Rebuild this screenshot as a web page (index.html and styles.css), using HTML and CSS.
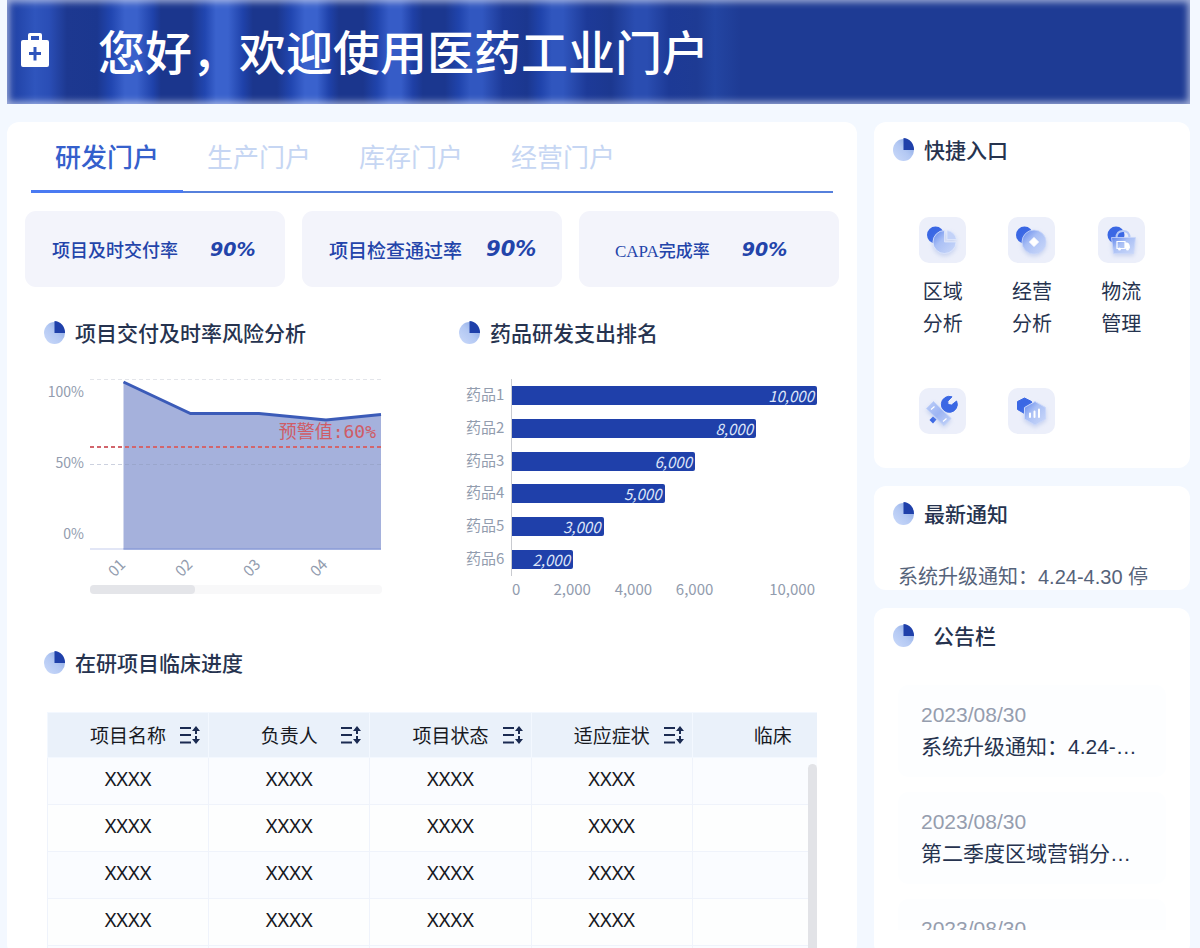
FILE: index.html
```html
<!DOCTYPE html>
<html lang="zh-CN">
<head>
<meta charset="utf-8">
<title>医药工业门户</title>
<meta name="viewport" content="width=device-width, initial-scale=1">
<link rel="stylesheet" href="styles.css">
</head>
<body>
<svg class="defs" aria-hidden="true">
  <defs>
    <linearGradient id="pie-light" x1="0" y1="1" x2="1" y2="0">
      <stop offset="0" stop-color="#cbdafa"/><stop offset=".5" stop-color="#b3c8f3"/><stop offset="1" stop-color="#7f9fe0"/>
    </linearGradient>
    <linearGradient id="glass" x1="0" y1="0" x2="1" y2="1">
      <stop offset="0" stop-color="#5d83ec"/><stop offset=".4" stop-color="#a9bff5"/><stop offset="1" stop-color="#ccd9f9"/>
    </linearGradient>
    <linearGradient id="glass-plate" x1="0" y1="0" x2="1" y2="1">
      <stop offset="0" stop-color="#bccdf8"/><stop offset=".5" stop-color="#9db5f3"/><stop offset="1" stop-color="#c6d5f9"/>
    </linearGradient>
    <filter id="soft" x="-30%" y="-30%" width="160%" height="170%">
      <feDropShadow dx="0" dy="2" stdDeviation="2" flood-color="#8fa6e0" flood-opacity=".4"/>
    </filter>
    <symbol id="pie" viewBox="0 0 21 23">
      <ellipse cx="10.5" cy="12" rx="10.5" ry="11" fill="url(#pie-light)"/>
      <path d="M10.500 12V0A10.500 12 0 0 1 21 12Z" fill="#1f40aa"/>
    </symbol>
    <symbol id="sort" viewBox="0 0 20 18">
      <g fill="none" stroke="#1b2b52" stroke-width="2"><path d="M0 2H11M0 9H11M0 16.500H11M16 3.500V8M16 10V15"/></g>
      <path d="M16 0L20 5H12ZM16 18L20 13H12Z" fill="#1b2b52"/>
    </symbol>
  </defs>
</svg>

<header class="banner">
  <svg class="banner-icon" viewBox="0 0 28 34" aria-hidden="true">
    <path d="M7 7V2Q7 0 9 0H19Q21 0 21 2V7H26Q28 7 28 9V32Q28 34 26 34H2Q0 34 0 32V9Q0 7 2 7ZM10 7H18V3H10ZM12.500 14V19H8V22H12.500V27.500H15.500V22H20V19H15.500V14Z" fill="#fff" fill-rule="evenodd"/>
  </svg>
  <h1 class="banner-title">您好，欢迎使用医药工业门户</h1>
</header>

<main class="layout">
  <section class="card portal">
    <nav class="tabs">
      <button class="tab tab-active" type="button">研发门户</button>
      <button class="tab" type="button">生产门户</button>
      <button class="tab" type="button">库存门户</button>
      <button class="tab" type="button">经营门户</button>
    </nav>

    <div class="stats">
      <div class="stat"><span class="stat-label">项目及时交付率</span><span class="stat-value">90%</span></div>
      <div class="stat stat-large"><span class="stat-label">项目检查通过率</span><span class="stat-value">90%</span></div>
      <div class="stat stat-small"><span class="stat-label">CAPA完成率</span><span class="stat-value">90%</span></div>
    </div>

    <div class="charts">
      <section>
        <h2 class="title"><svg class="pie"><use href="#pie"/></svg>项目交付及时率风险分析</h2>
        <svg class="area-chart" viewBox="0 0 340 230" role="img" aria-label="项目交付及时率风险分析">
          <path d="M46 9.500H337" class="grid-line"/>
          <path d="M79.500 12L146.500 43.500H215L282 50L337 44.500V179.500H79.500Z" fill="#a5b1dc"/>
          <path d="M46 94.500H337" class="grid-line grid-mid"/>
          <path d="M46 179H337" stroke="#8d9edb" stroke-opacity=".5"/>
          <path d="M79.500 179H337" stroke="#8497d6"/>
          <path d="M79.500 12L146.500 43.500H215L282 50L337 44.500" fill="none" stroke="#3b5bb8" stroke-width="3"/>
          <path d="M46 77H337" class="warn-line"/>
          <text x="332" y="68" class="warn-text">预警值:60%</text>
          <g class="axis-y"><text x="40" y="27">100%</text><text x="40" y="98">50%</text><text x="40" y="169">0%</text></g>
          <g class="axis-x">
            <text transform="translate(73 198) rotate(-45)" y="5">01</text>
            <text transform="translate(140 198) rotate(-45)" y="5">02</text>
            <text transform="translate(208 198) rotate(-45)" y="5">03</text>
            <text transform="translate(275 198) rotate(-45)" y="5">04</text>
          </g>
          <rect x="46" y="215" width="292" height="9" rx="4" fill="#f8f8f9"/>
          <rect x="46" y="215" width="105" height="9" rx="4" fill="#e4e5e9"/>
        </svg>
      </section>

      <section>
        <h2 class="title"><svg class="pie"><use href="#pie"/></svg>药品研发支出排名</h2>
        <div class="bar-chart">
          <div class="bar-names"><span>药品1</span><span>药品2</span><span>药品3</span><span>药品4</span><span>药品5</span><span>药品6</span></div>
          <div class="bar-plot">
            <div class="bar" style="width:100%">10,000</div>
            <div class="bar" style="width:80%">8,000</div>
            <div class="bar" style="width:60%">6,000</div>
            <div class="bar" style="width:50%">5,000</div>
            <div class="bar" style="width:30%">3,000</div>
            <div class="bar" style="width:20%">2,000</div>
          </div>
          <div class="bar-scale"><span>0</span><span>2,000</span><span>4,000</span><span>6,000</span><span>10,000</span></div>
        </div>
      </section>
    </div>

    <section class="progress">
      <h2 class="title"><svg class="pie"><use href="#pie"/></svg>在研项目临床进度</h2>
      <div class="table-wrap">
        <table class="table">
          <thead>
            <tr>
              <th><div class="th"><span>项目名称</span><button class="sort" type="button" aria-label="排序"><svg><use href="#sort"/></svg></button></div></th>
              <th><div class="th"><span>负责人</span><button class="sort" type="button" aria-label="排序"><svg><use href="#sort"/></svg></button></div></th>
              <th><div class="th"><span>项目状态</span><button class="sort" type="button" aria-label="排序"><svg><use href="#sort"/></svg></button></div></th>
              <th><div class="th"><span>适应症状</span><button class="sort" type="button" aria-label="排序"><svg><use href="#sort"/></svg></button></div></th>
              <th><div class="th"><span>临床</span></div></th>
            </tr>
          </thead>
          <tbody>
            <tr><td>XXXX</td><td>XXXX</td><td>XXXX</td><td>XXXX</td><td></td></tr>
            <tr><td>XXXX</td><td>XXXX</td><td>XXXX</td><td>XXXX</td><td></td></tr>
            <tr><td>XXXX</td><td>XXXX</td><td>XXXX</td><td>XXXX</td><td></td></tr>
            <tr><td>XXXX</td><td>XXXX</td><td>XXXX</td><td>XXXX</td><td></td></tr>
            <tr><td></td><td></td><td></td><td></td><td></td></tr>
          </tbody>
        </table>
        <div class="scroll-thumb"></div>
      </div>
    </section>
  </section>

  <aside class="side">
    <section class="card side-card">
      <h2 class="title"><svg class="pie"><use href="#pie"/></svg>快捷入口</h2>
      <div class="shortcuts">
        <button class="shortcut" type="button">
          <svg class="tile" viewBox="0 0 47 46" aria-hidden="true">
            <circle cx="16.500" cy="18" r="8.500" fill="#3a67e4"/>
            <g filter="url(#soft)" stroke="#dfe8fd" stroke-width=".8">
              <path d="M25.500 13.500A11.500 11.500 0 1 0 37 25H25.500Z" fill="url(#glass)"/>
              <path d="M28 13.500A10.500 10.500 0 0 1 37.500 22.500H28Z" fill="#c3d2f8"/>
            </g>
          </svg>
          <span class="shortcut-name">区域<br>分析</span>
        </button>
        <button class="shortcut" type="button">
          <svg class="tile" viewBox="0 0 47 46" aria-hidden="true">
            <circle cx="16.500" cy="18" r="8.500" fill="#3a67e4"/>
            <circle cx="26" cy="25" r="12" fill="url(#glass)" stroke="#c9d7fa" stroke-width=".8" filter="url(#soft)"/>
            <path d="M26 20.500L30.500 25L26 29.500L21.500 25Z" fill="#fff" stroke="#fff" stroke-linejoin="round"/>
          </svg>
          <span class="shortcut-name">经营<br>分析</span>
        </button>
        <button class="shortcut" type="button">
          <svg class="tile" viewBox="0 0 47 46" aria-hidden="true">
            <circle cx="18" cy="18" r="8.500" fill="#3a67e4"/>
            <path d="M18.500 21Q18.500 14 25 14T31.500 21" fill="none" stroke="#b4c8f7" stroke-width="2"/>
            <path d="M13.500 20.500H37.500L35.500 36.500H15.500Z" fill="url(#glass)" stroke="#c9d7fa" stroke-width=".8" filter="url(#soft)"/>
            <path d="M19 24.500H27V31.500H19Z" fill="none" stroke="#fff" stroke-width="1.200"/>
            <path d="M27 25.500H29Q32 26 32 31.500H27Z" fill="#fff"/>
            <circle cx="21.500" cy="32" r="1.500" fill="#fff"/><circle cx="29.500" cy="32" r="1.500" fill="#fff"/>
          </svg>
          <span class="shortcut-name">物流<br>管理</span>
        </button>
        <button class="shortcut" type="button" aria-label="维修工具">
          <svg class="tile" viewBox="0 0 47 46" aria-hidden="true">
            <path d="M33 8.800A8 8 0 1 0 37.600 13L32.500 17L29 16.500L28.800 13.200Z" fill="#3a67e4" stroke="#3a67e4" stroke-linejoin="round"/>
            <path d="M14 28.500L17.500 31.500L14 35.500L10.500 32Z" fill="#3a67e4"/>
            <path d="M14.500 13.500L32 30.500L25 37.500L7.500 20.500Z" fill="url(#glass-plate)" stroke="#bfd0f8" stroke-linejoin="round" filter="url(#soft)"/>
            <path d="M12 21.500L15.500 18.500M24 33.500L27.500 30.500" stroke="#fff" stroke-width="1.200"/>
          </svg>
        </button>
        <button class="shortcut" type="button" aria-label="数据统计">
          <svg class="tile" viewBox="0 0 47 46" aria-hidden="true">
            <path d="M16.500 10L23.500 13.500V21.500L16.500 25.500L9.500 21.500V13.500Z" fill="#3a67e4" stroke="#3a67e4" stroke-linejoin="round"/>
            <path d="M27 13.500L37.500 19.500V31L27 37L16.500 31V19.500Z" fill="url(#glass)" stroke="#c9d7fa" stroke-linejoin="round" filter="url(#soft)"/>
            <path d="M22 25.500V29M26.500 23.500V29M31 21.500V29" stroke="#fff" stroke-width="2" stroke-linecap="round"/>
          </svg>
        </button>
      </div>
    </section>

    <section class="card side-card notice">
      <h2 class="title"><svg class="pie"><use href="#pie"/></svg>最新通知</h2>
      <p class="notice-text">系统升级通知：4.24-4.30 停</p>
    </section>

    <section class="card side-card board">
      <h2 class="title title-spaced"><svg class="pie"><use href="#pie"/></svg>公告栏</h2>
      <ul class="board-list">
        <li class="board-item"><time class="board-date">2023/08/30</time><span class="board-text">系统升级通知：4.24-…</span></li>
        <li class="board-item"><time class="board-date">2023/08/30</time><span class="board-text">第二季度区域营销分…</span></li>
        <li class="board-item"><time class="board-date">2023/08/30</time></li>
      </ul>
    </section>
  </aside>
</main>
</body>
</html>
```
FILE: styles.css
```css
* { box-sizing: border-box; }

body {
  margin: 0;
  padding: 0 10px 0 7px;
  height: 100vh;
  overflow: hidden;
  background: #f3f8ff;
  color: #26334f;
  font-family: "Liberation Sans", "Noto Sans CJK SC", sans-serif;
}

h1, h2, p, ul { margin: 0; padding: 0; }
button { border: 0; padding: 0; background: none; font: inherit; color: inherit; cursor: pointer; }
.defs { position: absolute; width: 0; height: 0; }

/* Banner */
.banner {
  display: flex;
  align-items: center;
  gap: 49px;
  height: 104px;
  padding: 0 0 5px 14px;
  background: linear-gradient(90deg,
    #1f3fa2 0, #2447ac 12px, #2f55bd 28px, #2a4eb6 42px, #1d3890 60px, #1b378f 90px,
    #2146b0 104px, #3a61cb 118px, #3a61cb 130px, #1f42aa 146px, #1b368d 154px, #1b368d 184px,
    #2146b0 198px, #3a62cd 209px, #3a62cd 221px, #1f42aa 236px, #1b368d 246px, #1b368d 270px,
    #2146b0 284px, #3a62cd 298px, #3a62cd 310px, #1f42aa 322px, #1b368d 332px, #1b368d 356px,
    #2044ac 370px, #365cc7 382px, #365cc7 394px, #1f40a6 406px, #1b378f 416px, #1b378f 438px,
    #2044ac 452px, #3157c0 463px, #3157c0 475px, #1d3a98 496px, #1b378f 520px,
    #2044ac 534px, #3056be 545px, #3056be 556px, #1d3a98 580px, #1c3890 604px,
    #2a4db1 628px, #2a4db1 640px, #1d3a96 662px, #1e3b94 690px,
    #2345a2 708px, #1e3b94 734px);
  box-shadow: inset 0 0 7px 2px rgba(214, 220, 240, .75);
}
.banner-icon { width: 28px; height: 34px; }
.banner-title {
  color: #fff;
  font-family: "Noto Sans CJK SC", sans-serif;
  font-size: 47px;
  font-weight: 500;
  line-height: 60px;
  white-space: nowrap;
}

/* Page grid */
.layout {
  display: grid;
  grid-template-columns: 850fr 316fr;
  grid-template-rows: minmax(0, 1fr);
  gap: 17px;
  height: calc(100vh - 114px);
  margin-top: 18px;
}
.card { background: #fff; border-radius: 12px; overflow: hidden; }
.portal { padding: 0 18px; }

.title {
  display: flex;
  align-items: center;
  gap: 10px;
  font-family: "Noto Sans CJK SC", sans-serif;
  font-size: 21px;
  font-weight: 500;
  line-height: 24px;
  white-space: nowrap;
}
.title-spaced { gap: 19px; }
.pie { width: 21px; height: 23px; flex: none; }

/* Tabs */
.tabs {
  display: flex;
  align-items: flex-end;
  height: 71px;
  margin: 0 6px;
  background: linear-gradient(#5680dc, #5680dc) bottom / 100% 2px no-repeat;
}
.tab {
  height: 71px;
  padding: 0 24px 2px;
  border-bottom: 3px solid transparent;
  color: #c6d6f3;
  font-family: "Noto Sans CJK SC", sans-serif;
  font-size: 26px;
  white-space: nowrap;
}
.tab-active { border-bottom-color: #4a7af2; color: #3560cc; font-weight: 500; }

/* Stat cards */
.stats { display: grid; grid-template-columns: repeat(3, 1fr); gap: 17px; margin-top: 18px; }
.stat {
  display: flex;
  align-items: center;
  gap: 32px;
  height: 76px;
  padding-left: 27px;
  border-radius: 11px;
  background: #f3f4fb;
  color: #2344aa;
  font-size: 18px;
  white-space: nowrap;
}
.stat-large { font-size: 19px; gap: 24px; }
.stat-small { font-size: 17px; padding-left: 36px; }
.stat-label { font-family: "Liberation Serif", "Noto Sans CJK SC", serif; font-weight: 500; }
.stat-value { font-family: "DejaVu Sans", sans-serif; font-size: 19px; font-weight: 700; font-style: italic; }
.stat-large .stat-value { font-size: 21px; }

/* Charts */
.charts {
  display: grid;
  grid-template-columns: 415fr 380fr;
  margin: 33px 0 0 19px;
}
.area-chart { display: block; width: 100%; max-width: 340px; margin-top: 26px; font-family: "Noto Sans CJK SC", sans-serif; }
.grid-line { stroke: #e3e5ea; stroke-dasharray: 4 3; }
.grid-mid { stroke: #8f9ab8; stroke-opacity: .45; }
.warn-line { stroke: #d2656c; stroke-width: 2; stroke-dasharray: 4 3; }
.warn-text { fill: #cf5c66; font-family: "DejaVu Sans Mono", "Noto Sans CJK SC", monospace; font-size: 18px; text-anchor: end; }
.axis-y, .axis-x { fill: #929cae; font-size: 14px; }
.axis-y { text-anchor: end; }
.axis-x { font-size: 15px; text-anchor: middle; }

.bar-chart {
  display: grid;
  grid-template-columns: 45px 1fr;
  grid-template-rows: 197px 26px;
  margin: 35px 22px 0 7px;
  color: #929cae;
  font-family: "Noto Sans CJK SC", sans-serif;
  font-size: 15px;
}
.bar-names, .bar-plot { display: grid; grid-template-rows: repeat(6, 1fr); align-items: center; }
.bar-names { line-height: 20px; }
.bar-names span { padding-bottom: 3px; }
.bar-plot { border-left: 1px solid #c9cbd0; }
.bar {
  height: 19px;
  padding-right: 3px;
  border-radius: 0 2px 2px 0;
  background: #1f40aa;
  color: #dde5f8;
  font-style: italic;
  line-height: 19px;
  text-align: right;
}
.bar-scale { grid-column: 2; display: flex; line-height: 26px; }
.bar-scale span { width: 20%; text-align: center; }
.bar-scale span:first-child { width: 10%; padding-left: 1px; text-align: left; }
.bar-scale span:last-child { width: 30%; padding-right: 2px; text-align: right; }

/* Progress table */
.progress { margin-top: 48px; }
.progress .title { margin-left: 19px; }
.table-wrap { position: relative; margin: 38px 22px 0; overflow: hidden; }
.table { width: 807px; table-layout: fixed; border-collapse: collapse; font-family: "Noto Sans CJK SC", sans-serif; color: #17191f; }
.table th, .table td { border: 1px solid #eff3fb; padding: 0; text-align: center; }
.table th { height: 45px; background: #eaf1fa; font-size: 19px; font-weight: 400; border-color: #f3f8ff; }
.table td { height: 47px; padding-bottom: 4px; font-family: "Noto Sans", "Noto Sans CJK SC", sans-serif; font-size: 20px; line-height: 28px; background: #fdfefe; }
.table tr:nth-child(odd) td { background: #fafcff; }
.th { display: grid; grid-template-columns: 1fr auto 1fr; align-items: center; padding: 0 8px; line-height: 28px; }
.th span { grid-column: 2; }
.sort { justify-self: end; height: 20px; }
.sort svg { display: block; width: 20px; height: 20px; }
.scroll-thumb { position: absolute; top: 52px; right: 0; bottom: 0; width: 9px; border-radius: 5px 5px 0 0; background: #e2e3e7; }

/* Side column */
.side { display: flex; flex-direction: column; gap: 18px; min-height: 0; }
.side-card { padding: 15px 24px 0 19px; }
.shortcuts { display: grid; grid-template-columns: repeat(3, 1fr); row-gap: 48px; margin: 56px 0 34px 5px; }
.shortcut { display: flex; flex-direction: column; align-items: center; gap: 13px; font-size: 20px; line-height: 32px; }
.tile { width: 47px; height: 46px; border-radius: 10px; background: #eceffa; }

.notice { flex: none; height: 104px; }
.notice-text { margin: 38px -10px 0 5px; color: #56637a; font-size: 20px; line-height: 28px; white-space: nowrap; }

.board { flex: 1; display: flex; flex-direction: column; min-height: 0; padding-bottom: 26px; }
.board-list { display: flex; flex-direction: column; gap: 15px; flex: 1; min-height: 0; margin: 38px 0 0 5px; overflow: hidden; list-style: none; }
.board-item { display: flex; flex: none; flex-direction: column; height: 92px; padding: 14px 23px; border-radius: 10px; background: #fdfeff; font-size: 21px; line-height: 32px; white-space: nowrap; }
.board-date { color: #959dae; }
```
